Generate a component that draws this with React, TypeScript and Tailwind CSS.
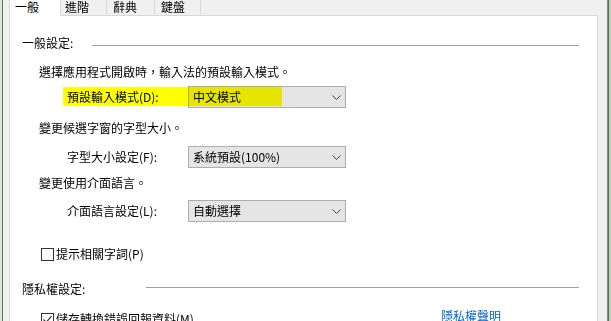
import type { FC, ReactNode } from 'react';

const Chevron: FC = () => (
  <svg width="9" height="5" viewBox="0 0 9 5" className="shrink-0">
    <path d="M0.5 0.5 L4.5 4.5 L8.5 0.5" fill="none" stroke="#404040" strokeWidth="1" />
  </svg>
);

const Select: FC<{ value: string }> = ({ value }) => (
  <div className="flex h-[22px] w-[158px] shrink-0 items-center justify-between border border-[#adadad] bg-[#e5e5e5] pl-[4px] pr-[4px]">
    <span>{value}</span>
    <Chevron />
  </div>
);

const Checkbox: FC<{ checked?: boolean }> = ({ checked }) => (
  <div className="flex h-[13px] w-[13px] shrink-0 items-center justify-center border border-[#333333] bg-white">
    {checked && (
      <svg width="11" height="11" viewBox="0 0 11 11">
        <path d="M1.5 5.5 L4.2 8.3 L9.5 2.2" fill="none" stroke="#333333" strokeWidth="1.2" />
      </svg>
    )}
  </div>
);

const SectionHeader: FC<{ label: string; labelWidth: string; lineTop: string; className?: string }> = ({
  label,
  labelWidth,
  lineTop,
  className = '',
}) => (
  <div className={`flex h-4 pl-[12px] ${className}`}>
    <span className={`shrink-0 ${labelWidth}`}>{label}</span>
    <div className={`mr-[18px] h-px flex-1 bg-[#a0a0a0] ${lineTop}`} />
  </div>
);

const SettingRow: FC<{ label: string; value: string; className?: string; children?: ReactNode }> = ({
  label,
  value,
  className = '',
  children,
}) => (
  <div className={`relative flex h-[22px] items-center pl-[57px] ${className}`}>
    <span className="w-[121px] shrink-0">{label}</span>
    <Select value={value} />
    {children}
  </div>
);

const tabs = [
  { name: '進階', w: 'w-[46px]', pl: 'pl-[4px]' },
  { name: '辭典', w: 'w-[48px]', pl: 'pl-[6px]' },
  { name: '鍵盤', w: 'w-[46px]', pl: 'pl-[6px]' },
];

export default function App() {
  return (
    <div className="flex h-[321px] w-[611px] overflow-hidden bg-[#f0f0f0] font-['Noto_Sans_CJK_TC','Noto_Sans',sans-serif] text-[12px] leading-4 text-black">
      <div className="w-[2px] shrink-0 bg-[#e3e3e3]" />
      <div className="w-px shrink-0 bg-[#3a8a3a]" />

      <div className="flex flex-1 flex-col pl-[6px] pr-[9px]">
        {/* tab strip */}
        <div className="-mt-[6px] flex h-[21px] items-start">
          <div className="relative z-10 h-[22px] w-[52px] shrink-0 border-x border-t border-[#d9d9d9] bg-white pl-[5px] pt-[4px]">
            一般
          </div>
          {tabs.map((t) => (
            <div
              key={t.name}
              className={`h-[21px] shrink-0 border-r border-t border-[#d9d9d9] bg-[#f0f0f0] pt-[4px] ${t.w} ${t.pl}`}
            >
              {t.name}
            </div>
          ))}
        </div>

        {/* tab panel */}
        <div className="flex h-[400px] flex-col border border-[#d9d9d9] bg-white">
          <SectionHeader label="一般設定:" labelWidth="w-[70px]" lineTop="mt-[10px]" className="mt-[19px]" />

          <p className="mt-[13px] pl-[29px]">選擇應用程式開啟時，輸入法的預設輸入模式。</p>
          <SettingRow label="預設輸入模式(D):" value="中文模式" className="mt-[6px]">
            <div className="pointer-events-none absolute left-[53px] top-[1px] h-[19px] w-[219px] bg-[#ffff00] mix-blend-multiply" />
          </SettingRow>

          <p className="mt-[12px] pl-[29px]">變更候選字窗的字型大小。</p>
          <SettingRow label="字型大小設定(F):" value="系統預設(100%)" className="mt-[10px]" />

          <p className="mt-[7px] pl-[29px]">變更使用介面語言。</p>
          <SettingRow label="介面語言設定(L):" value="自動選擇" className="mt-[9px]" />

          <div className="mt-[24px] flex h-4 items-center pl-[31px]">
            <Checkbox />
            <span className="ml-[2px]">提示相關字詞(P)</span>
          </div>

          <SectionHeader label="隱私權設定:" labelWidth="w-[124px]" lineTop="mt-[6px]" className="mt-[19px]" />

          <div className="mt-[14px] flex h-4 items-center pl-[31px]">
            <Checkbox checked />
            <span className="ml-[2px] w-[385px]">儲存轉換錯誤回報資料(M)</span>
            <span className="-mt-[6px] text-[#0066cc]">隱私權聲明</span>
          </div>
        </div>
      </div>

      <div className="w-px shrink-0 bg-[#8c8c8c]" />
      <div className="w-px shrink-0 bg-[#3a8a3a]" />
      <div className="w-[2px] shrink-0 bg-[#c8c8c8]" />
    </div>
  );
}
